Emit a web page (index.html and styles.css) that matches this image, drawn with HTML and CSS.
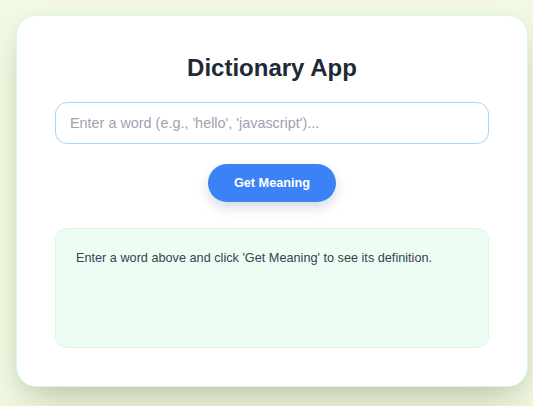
FILE: index.html
```html
<!DOCTYPE html>
<html lang="en">
<head>
<meta charset="utf-8">
<title>Dictionary App</title>
<link rel="stylesheet" href="styles.css">
</head>
<body>
<main class="page">
  <section class="card">
    <h1 class="title">Dictionary App</h1>
    <input class="word-input" type="text" placeholder="Enter a word (e.g., 'hello', 'javascript')...">
    <div class="actions">
      <button class="btn" type="button">Get Meaning</button>
    </div>
    <div class="result">
      <p class="hint">Enter a word above and click 'Get Meaning' to see its definition.</p>
    </div>
  </section>
</main>
</body>
</html>
```

FILE: styles.css
```css
* { box-sizing: border-box; }
html, body { margin: 0; padding: 0; }
body {
  font-family: "Liberation Sans", Arial, sans-serif;
  background: #f2f9e3;
  min-height: 406px;
  overflow: hidden;
}
.page {
  padding: 15px 16px;
  display: flex;
}
.card {
  flex: 0 0 512px;
  width: 512px;
  background: #ffffff;
  border: 1px solid #d5f7e6;
  border-radius: 20px;
  padding: 36px 38px 38px;
  box-shadow: 0 22px 40px -10px rgba(70, 90, 40, 0.28), 0 4px 14px rgba(90, 110, 60, 0.08);
  display: flex;
  flex-direction: column;
}
.title {
  margin: 0 0 18px;
  text-align: center;
  font-size: 24px;
  line-height: 32px;
  font-weight: 700;
  color: #1f2937;
}
.word-input {
  width: 100%;
  height: 42px;
  border: 1px solid #a8d8f6;
  border-radius: 12px;
  padding: 0 14px;
  font-family: inherit;
  font-size: 14.4px;
  color: #1f2937;
  background: #fff;
  outline: none;
}
.word-input::placeholder { color: #9ca3af; }
.actions {
  display: flex;
  justify-content: center;
  margin-top: 20px;
}
.btn {
  height: 38px;
  padding: 0 26px;
  border: none;
  border-radius: 999px;
  background: #3b82f6;
  color: #fff;
  font-family: inherit;
  font-size: 12.7px;
  font-weight: 700;
  box-shadow: 0 6px 12px rgba(30, 60, 120, 0.18);
}
.result {
  margin-top: 26px;
  min-height: 120px;
  background: #eefdf3;
  border: 1px solid #d8f8e6;
  border-radius: 12px;
  padding: 19px 20px;
}
.hint {
  margin: 0;
  font-size: 12.7px;
  line-height: 20px;
  color: #374151;
}
```
